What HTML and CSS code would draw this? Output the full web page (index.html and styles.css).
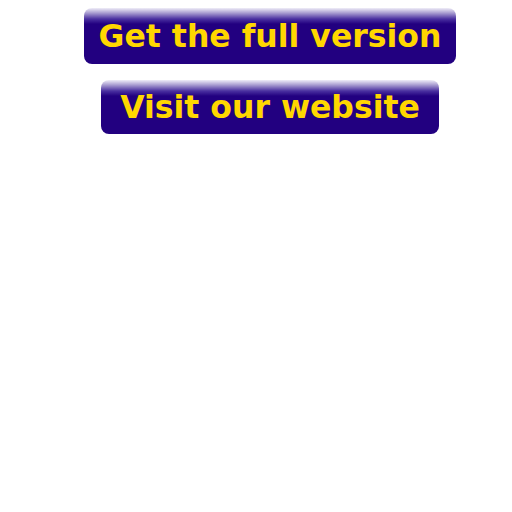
FILE: index.html
```html
<!DOCTYPE html>
<html>
<head>
<meta charset="utf-8">
<link rel="stylesheet" href="styles.css">
</head>
<body>
<div class="stack">
  <a class="btn btn-full" href="#">Get the full version</a>
  <a class="btn btn-site" href="#">Visit our website</a>
</div>
</body>
</html>
```
FILE: styles.css
```css
html, body {
  margin: 0;
  padding: 0;
  background: #ffffff;
  overflow: hidden;
}
.stack {
  display: flex;
  flex-direction: column;
  align-items: center;
  gap: 16px;
  padding: 8px 0 0 28px;
}
.btn {
  display: block;
  box-sizing: border-box;
  text-align: center;
  text-decoration: none;
  font-family: "DejaVu Sans", sans-serif;
  font-weight: bold;
  font-size: 31.5px;
  color: #ffd700;
  border-radius: 8px;
  background: linear-gradient(to bottom, #f0eef8 0px, #a89cd0 5px, #4a30a0 11px, #220080 16px, #220080 100%);
}
.btn-full {
  width: 372px;
  height: 56px;
  line-height: 56px;
}
.btn-site {
  width: 338px;
  height: 54px;
  line-height: 54px;
}
```
